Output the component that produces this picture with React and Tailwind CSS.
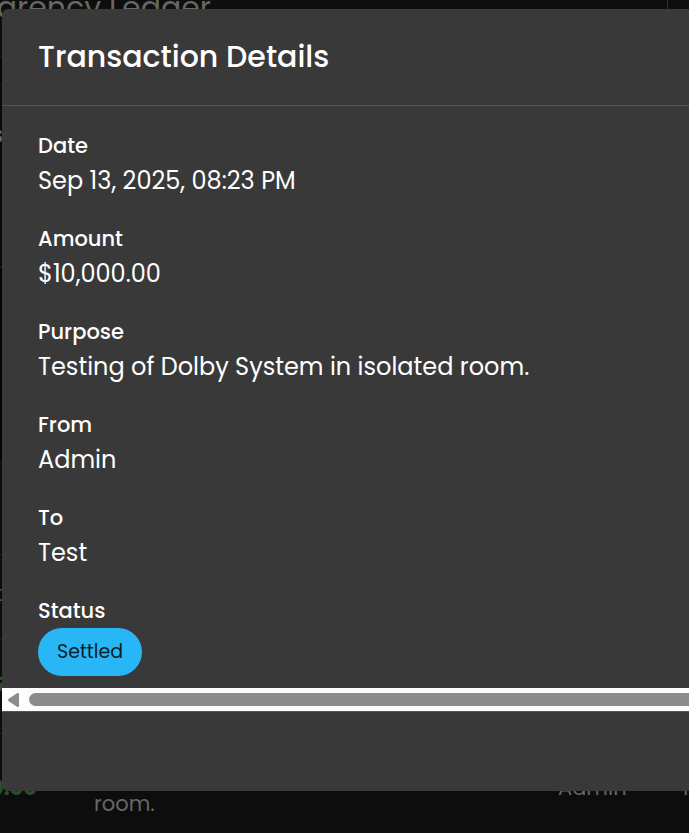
const details = [
  { label: "Date", value: "Sep 13, 2025, 08:23 PM" },
  { label: "Amount", value: "$10,000.00" },
  { label: "Purpose", value: "Testing of Dolby System in isolated room." },
  { label: "From", value: "Admin" },
  { label: "To", value: "Test" },
];

function LedgerPage() {
  return (
    <div
      aria-hidden="true"
      className="absolute inset-0 flex flex-col overflow-hidden bg-[#0d0d0d] text-[21px] leading-[30px] text-[#666666]"
    >
      <header className="flex h-[57px] items-start justify-between bg-[#0c0f0c]">
        <div className="flex h-[40px] w-[211px] justify-end overflow-hidden whitespace-nowrap text-[30px] leading-[16px]">
          Transparency Ledger
        </div>
        <div className="h-full w-[22px] border-l border-[#24343b]" />
      </header>
      <div className="h-[28px] border-y border-[#0b2029] bg-[#03050f]" />
      <div className="flex h-[183px] flex-col justify-start border-b border-[#0b2b35] bg-[#020c14] pt-[35px]">
        <div className="flex w-[3px] justify-end overflow-hidden text-[24px] font-semibold">s</div>
      </div>
      <div className="h-[192px] bg-[#04050b]" />
      <div className="h-[95px] border-b border-[#202020]" />
      <div className="h-[85px] border-b border-[#202020] pt-[24px]">
        <div className="flex w-[3px] justify-end overflow-hidden text-[#34546c]">t</div>
      </div>
      <div className="h-[94px] border-b border-[#202020] pt-[30px]">
        <div className="flex w-[4px] justify-end overflow-hidden font-bold text-[#285027]">5</div>
      </div>
      <div className="flex flex-1 justify-between pt-[39px]">
        <div className="flex">
          <div className="flex w-[37px] justify-end overflow-hidden font-bold text-[#285027]">
            $10,000.00
          </div>
          <div className="w-[110px] pt-[16px] pl-[57px]">room.</div>
        </div>
        <div className="flex w-[131px] justify-between">
          <span>Admin</span>
          <span className="w-[9px] overflow-hidden">T</span>
        </div>
      </div>
    </div>
  );
}

function HorizontalScrollbar() {
  return (
    <div className="flex h-[23px] items-center bg-[#fcfcfc] pl-[5px]">
      <button type="button" aria-label="Scroll left" className="mr-[9px] flex w-[13px] text-[#8b8b8b]">
        <svg viewBox="0 0 13 16" className="h-[16px] w-[13px]" fill="currentColor">
          <path d="M10.5 1H11Q12 1 12 2V14Q12 15 11 15H10.5L2 9.5Q0 8 2 6.5Z" />
        </svg>
      </button>
      <div className="h-[13px] flex-1 rounded-l-full bg-[#8b8b8b]" />
    </div>
  );
}

export default function App() {
  return (
    <main className="relative min-h-screen overflow-hidden bg-[#0d0d0d] pt-[9px] pl-[2px] font-[Poppins,Inter,sans-serif]">
      <LedgerPage />
      <section
        role="dialog"
        aria-labelledby="dialog-title"
        className="relative rounded-l-[6px] bg-[#393939] text-white"
      >
        <header className="border-b border-[#555555] px-[36px] py-[24px]">
          <h1 id="dialog-title" className="text-[30px] leading-[48px] font-medium">
            Transaction Details
          </h1>
        </header>
        <dl className="flex flex-col gap-[24px] px-[36px] pt-[24px] pb-[12px]">
          {details.map(({ label, value }) => (
            <div key={label}>
              <dt className="text-[21px] leading-[32px] font-medium">{label}</dt>
              <dd className="text-[24px] leading-[37px]">{value}</dd>
            </div>
          ))}
          <div>
            <dt className="text-[21px] leading-[32px] font-medium">Status</dt>
            <dd className="mt-[1px] flex">
              <span className="rounded-full bg-[#29b6f6] px-[19px] py-[9px] text-[19px] leading-[30px] text-[#0b1d27]">
                Settled
              </span>
            </dd>
          </div>
        </dl>
        <HorizontalScrollbar />
        <footer className="h-[80px] border-t border-[#555555]" />
      </section>
    </main>
  );
}
